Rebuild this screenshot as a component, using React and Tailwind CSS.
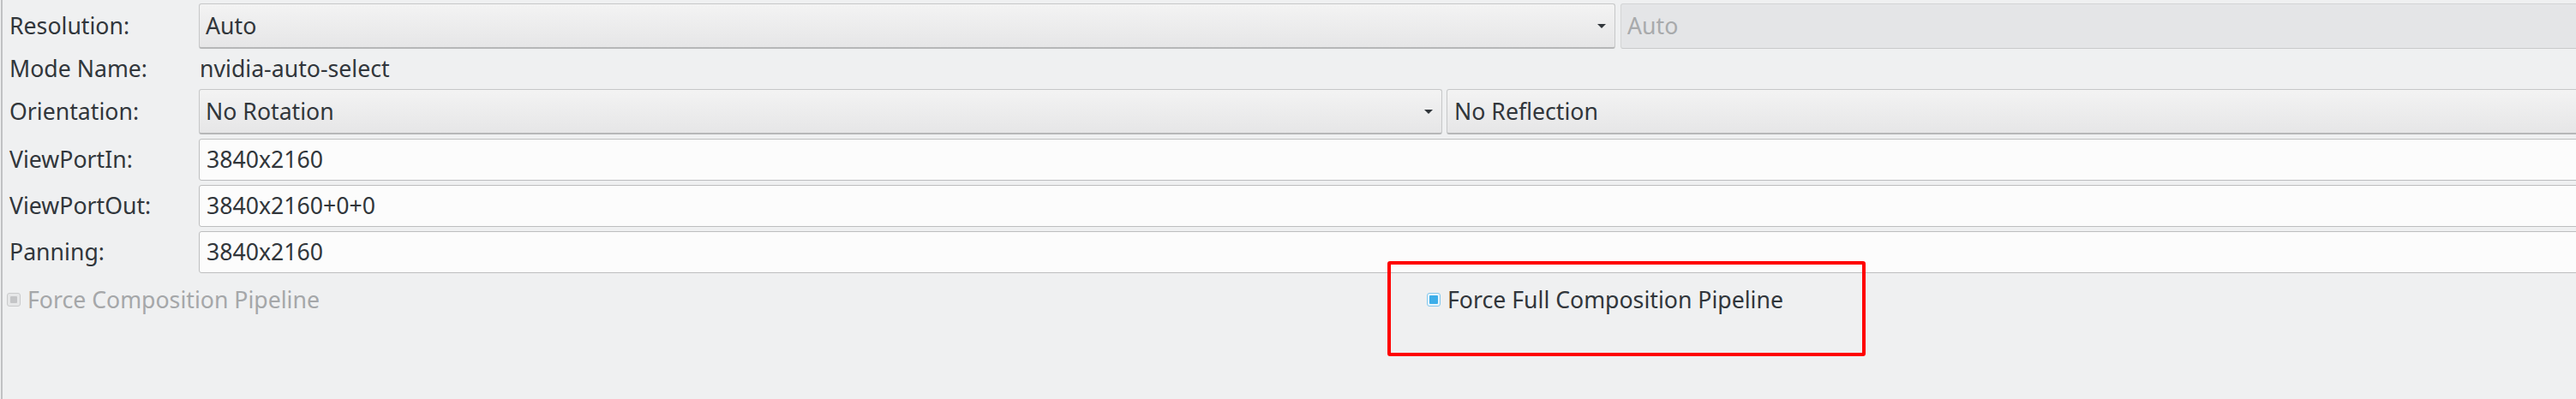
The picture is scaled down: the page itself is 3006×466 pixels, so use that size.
import React from "react";

const Arrow = () => (
  <svg width="10" height="5" viewBox="0 0 10 5" className="shrink-0">
    <path d="M0 0h10L5 5z" fill="#31363b" />
  </svg>
);

const Combo = ({ value, className = "", disabled = false, arrow = true }) => (
  <div
    className={
      "h-[53px] flex items-center justify-between pl-[7px] pr-[10px] rounded-[3px] border " +
      (disabled
        ? "bg-[#e4e5e7] border-[#d3d4d5] border-b-[#c9cacb] text-[#a8aaac] "
        : "bg-linear-to-b from-[#f3f3f3] to-[#e6e6e7] border-[#c6c7c8] border-b-[#b6b7b8] border-b-2 ") +
      className
    }
  >
    <span>{value}</span>
    {arrow && !disabled && <Arrow />}
  </div>
);

const Field = ({ value }) => (
  <div className="h-[49px] flex items-center pl-[8px] rounded-[3px] border border-[#bdbebf] bg-[#fcfcfc]">
    {value}
  </div>
);

const Label = ({ children }) => (
  <div className="flex items-center pl-[8px]">{children}</div>
);

export default function App() {
  return (
    <div
      className="w-[3006px] h-[466px] overflow-hidden bg-[#eff0f1] text-[#31363b] text-[26.67px] leading-none"
      style={{ fontFamily: '"Noto Sans", "Open Sans", sans-serif' }}
    >
      <div className="ml-px h-full border-l-2 border-[#c0c1c3] pt-[4px] w-[3040px]">
        <div className="grid grid-cols-[229px_1fr] gap-y-[5px]">
          <Label>Resolution:</Label>
          <div className="flex gap-[6px]">
            <Combo value="Auto" className="w-[1653px]" />
            <Combo value="Auto" disabled className="flex-1" />
          </div>

          <Label>Mode Name:</Label>
          <div className="h-[37px] flex items-center pl-px">nvidia-auto-select</div>

          <Label>Orientation:</Label>
          <div className="flex gap-[5px]">
            <Combo value="No Rotation" className="w-[1451px]" />
            <Combo value="No Reflection" arrow={false} className="flex-1 pl-[8px]" />
          </div>

          <Label>ViewPortIn:</Label>
          <Field value="3840x2160" />

          <Label>ViewPortOut:</Label>
          <Field value="3840x2160+0+0" />

          <Label>Panning:</Label>
          <Field value="3840x2160" />
        </div>

        <div className="flex items-center h-[24px] mt-[19px]">
          <div className="w-[1662px] flex items-center gap-[8px] pl-[5px] text-[#a5a7a9]">
            <span className="w-[16px] h-[16px] rounded-[3px] border border-[#c9cacb] bg-[#e6e7e8] p-[3px]">
              <span className="block w-full h-full rounded-[1px] bg-[#c4c5c7]" />
            </span>
            <span>Force Composition Pipeline</span>
          </div>
          <div className="relative flex items-center gap-[8px]">
            <span className="w-[16px] h-[16px] rounded-[3px] border border-[#86c8ec] bg-[#e8f5fc] p-[2px]">
              <span className="block w-full h-full rounded-[1px] bg-[#3daee9]" />
            </span>
            <span>Force Full Composition Pipeline</span>
            <div className="absolute left-[-46px] top-[-32px] w-[558px] h-[111px] border-4 border-[#ff0000] rounded-[3px]" />
          </div>
        </div>
      </div>
    </div>
  );
}
